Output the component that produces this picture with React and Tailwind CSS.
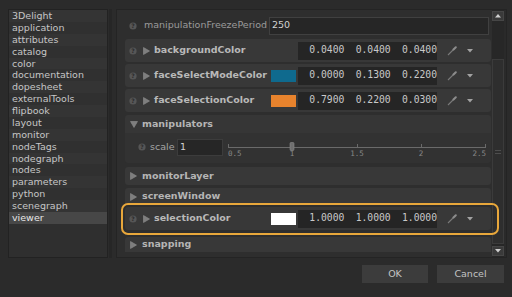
import React from "react";

const categories = [
  "3Delight",
  "application",
  "attributes",
  "catalog",
  "color",
  "documentation",
  "dopesheet",
  "externalTools",
  "flipbook",
  "layout",
  "monitor",
  "nodeTags",
  "nodegraph",
  "nodes",
  "parameters",
  "python",
  "scenegraph",
  "viewer",
];

const HelpIcon = ({ className = "" }) => (
  <svg width="8" height="8" viewBox="0 0 8 8" className={`shrink-0 ${className}`}>
    <circle cx="4" cy="4" r="3.6" fill="#565656" />
    <text x="4" y="6.2" textAnchor="middle" fontSize="6" fontWeight="bold" fill="#2c2c2c" fontFamily="DejaVu Sans, sans-serif">
      ?
    </text>
  </svg>
);

const TriRight = ({ className = "" }) => (
  <svg width="7" height="8" viewBox="0 0 7 8" className={`shrink-0 ${className}`}>
    <polygon points="0.5,0.5 6.5,4 0.5,7.5" fill="#7e7e7e" stroke="#8e8e8e" strokeWidth="0.6" />
  </svg>
);

const TriDown = ({ className = "" }) => (
  <svg width="8" height="7" viewBox="0 0 8 7" className={`shrink-0 ${className}`}>
    <polygon points="0.5,0.5 7.5,0.5 4,6.5" fill="#7e7e7e" stroke="#8e8e8e" strokeWidth="0.6" />
  </svg>
);

const Pipette = () => (
  <svg width="10" height="10" viewBox="0 0 10 10" className="shrink-0">
    <line x1="1" y1="9" x2="7" y2="3" stroke="#7a7a7a" strokeWidth="1.1" />
    <line x1="6.5" y1="3.5" x2="8.8" y2="1.2" stroke="#8c8c8c" strokeWidth="2" strokeLinecap="round" />
  </svg>
);

const Caret = () => (
  <svg width="6" height="4" viewBox="0 0 6 4" className="shrink-0">
    <polygon points="0,0 6,0 3,3.5" fill="#a2a2a2" />
  </svg>
);

const ColorRow = ({ label, swatch, values, className = "" }) => (
  <div className={`flex items-center h-[23px] bg-[#383838] rounded-[3px] ${className}`}>
    <HelpIcon className="ml-[4px]" />
    <TriRight className="ml-[6px]" />
    <span className="ml-[4px] flex-1 font-bold text-[9.5px] text-[#b9b9b9]">{label}</span>
    <div className="w-[25px] h-[12px]" style={swatch ? { background: swatch } : undefined} />
    <div className="ml-[2px] w-[139px] h-[18px] bg-[#252525] flex items-center font-['DejaVu_Sans_Mono',monospace] text-[9.7px] text-[#c9c9c9]">
      {values.map((v, i) => (
        <span key={i} className="flex-1 text-right">
          {v}
        </span>
      ))}
    </div>
    <div className="ml-[10px]">
      <Pipette />
    </div>
    <div className="ml-[10px] mr-[18px]">
      <Caret />
    </div>
  </div>
);

const Slider = () => {
  const ticks = [
    { x: 2, label: "0.5", anchor: "start" },
    { x: 66, label: "1", anchor: "middle" },
    { x: 131, label: "1.5", anchor: "middle" },
    { x: 195, label: "2", anchor: "middle" },
    { x: 259, label: "2.5", anchor: "end" },
  ];
  return (
    <svg width="262" height="20" viewBox="0 0 262 20" className="shrink-0">
      <line x1="2" y1="8.5" x2="259" y2="8.5" stroke="#6a6a6a" strokeWidth="1" />
      {ticks.map((t) => (
        <line key={t.label} x1={t.x + 0.5} y1="5" x2={t.x + 0.5} y2="9" stroke="#6a6a6a" strokeWidth="1" />
      ))}
      <rect x="64" y="3.5" width="4" height="8" rx="1" fill="#6f6f6f" stroke="#8a8a8a" strokeWidth="0.6" />
      {ticks.map((t) => (
        <text
          key={t.label + "l"}
          x={t.anchor === "end" ? t.x + 1 : t.x}
          y="17"
          textAnchor={t.anchor}
          fontSize="7.5"
          fill="#888888"
          fontFamily="DejaVu Sans Mono, monospace"
        >
          {t.label}
        </text>
      ))}
    </svg>
  );
};

const GroupHeader = ({ label, className = "", h = "h-[18px]" }) => (
  <div className={`flex items-center ${h} bg-[#383838] rounded-[3px] ${className}`}>
    <TriRight className="ml-[5px]" />
    <span className="ml-[5px] font-bold text-[9.5px] text-[#b5b5b5]">{label}</span>
  </div>
);

const ScrollBar = () => (
  <div className="w-[12px] flex flex-col pt-[1px] pb-[1px] bg-[#272727]">
    <div className="h-[10px] bg-[#3a3a3a] border border-[#464646] flex items-center justify-center">
      <svg width="6" height="4" viewBox="0 0 6 4">
        <polygon points="0,3.5 6,3.5 3,0" fill="#d0d0d0" />
      </svg>
    </div>
    <div className="h-[38px] bg-[#272727]" />
    <div className="flex-1 bg-[#2e2e2e] border border-[#3b3b3b] flex flex-col items-center justify-center gap-[2px]">
      <div className="w-[6px] h-px bg-[#4e4e4e]" />
      <div className="w-[6px] h-px bg-[#4e4e4e]" />
    </div>
    <div className="mt-[2px] h-[10px] bg-[#3a3a3a] border border-[#464646] flex items-center justify-center">
      <svg width="6" height="4" viewBox="0 0 6 4">
        <polygon points="0,0 6,0 3,3.5" fill="#d0d0d0" />
      </svg>
    </div>
  </div>
);

export default function App() {
  return (
    <div className="w-[512px] h-[297px] bg-[#2b2b2b] flex flex-col overflow-hidden font-['DejaVu_Sans',sans-serif]">
      <div className="flex pt-[9px] pl-[8px] h-[258px]">
        {/* category list */}
        <div className="w-[100px] h-[249px] border border-[#222222] bg-[#2f2f2f] flex flex-col">
          {categories.map((c, i) => (
            <div
              key={c}
              className={`h-[11.88px] leading-[11.88px] pl-[3px] text-[9.5px] ${
                c === "viewer"
                  ? "bg-[#474747] text-[#e6e6e6]"
                  : i % 2 === 0
                  ? "bg-[#343434] text-[#c6c6c6]"
                  : "bg-[#303030] text-[#c6c6c6]"
              }`}
            >
              {c}
            </div>
          ))}
        </div>

        <div className="w-[3px] ml-[1px] h-[249px] bg-[#262626]" />
        <div className="w-[4px]" />

        {/* preferences panel */}
        <div className="relative w-[391px] h-[249px] border border-[#242424] bg-[#2e2e2e] flex">
          <div className="flex-1 flex flex-col pl-[8px] pr-[1px] pt-[3px] overflow-hidden">
            <div className="flex items-center h-[25px] shrink-0">
              <HelpIcon className="ml-[4px]" />
              <span className="ml-[7px] flex-1 text-[9.5px] text-[#9b9b9b]">manipulationFreezePeriod</span>
              <div className="w-[220px] h-[18px] mr-[2px] bg-[#262626] border border-[#404040] flex items-center pl-[2px] text-[9.5px] text-[#d2d2d2]">
                250
              </div>
            </div>

            <ColorRow className="mt-[1px] shrink-0" label="backgroundColor" values={["0.0400", "0.0400", "0.0400"]} />
            <ColorRow className="mt-[2px] shrink-0" label="faceSelectModeColor" swatch="#0f6a8e" values={["0.0000", "0.1300", "0.2200"]} />
            <ColorRow className="mt-[2px] shrink-0" label="faceSelectionColor" swatch="#e8832d" values={["0.7900", "0.2200", "0.0300"]} />

            {/* manipulators group */}
            <div className="mt-[3px] shrink-0 flex flex-col rounded-[3px] overflow-hidden">
              <div className="flex items-center h-[18px] bg-[#363636]">
                <TriDown className="ml-[5px]" />
                <span className="ml-[4px] font-bold text-[9.5px] text-[#b5b5b5]">manipulators</span>
              </div>
              <div className="flex items-center h-[30px] bg-[#323232] pb-[2px]">
                <HelpIcon className="ml-[13px]" />
                <span className="ml-[4px] w-[27px] text-[9.5px] text-[#a5a5a5]">scale</span>
                <div className="w-[46px] h-[17px] bg-[#262626] border border-[#3c3c3c] flex items-center pl-[2px] text-[9.5px] text-[#d2d2d2]">
                  1
                </div>
                <div className="ml-[3px] mt-[4px]">
                  <Slider />
                </div>
              </div>
            </div>

            <GroupHeader className="mt-[4px] shrink-0" label="monitorLayer" />
            <GroupHeader className="mt-[3px] shrink-0" h="h-[17px]" label="screenWindow" />
            <ColorRow className="mt-[2px] shrink-0" label="selectionColor" swatch="#ffffff" values={["1.0000", "1.0000", "1.0000"]} />
            <div className="mt-[7px] shrink-0 flex items-center h-[15px] bg-[#383838] rounded-t-[3px]">
              <TriRight className="ml-[5px]" />
              <span className="ml-[5px] font-bold text-[9.5px] text-[#b5b5b5]">snapping</span>
            </div>
          </div>
          <ScrollBar />
          <div className="w-[2px] bg-[#2a2a2a]" />

          {/* highlight annotation */}
          <div className="absolute left-[4px] top-[193px] w-[378px] h-[32px] border-2 border-[#e8a73b] rounded-[7px] pointer-events-none" />
        </div>
      </div>

      <div className="flex justify-end gap-[9px] pt-[7px] pr-[8px]">
        <button className="w-[66px] h-[18px] bg-[#3c3c3c] text-[9.5px] text-[#c4c4c4]">OK</button>
        <button className="w-[67px] h-[18px] bg-[#3c3c3c] text-[9.5px] text-[#c4c4c4]">Cancel</button>
      </div>
    </div>
  );
}
